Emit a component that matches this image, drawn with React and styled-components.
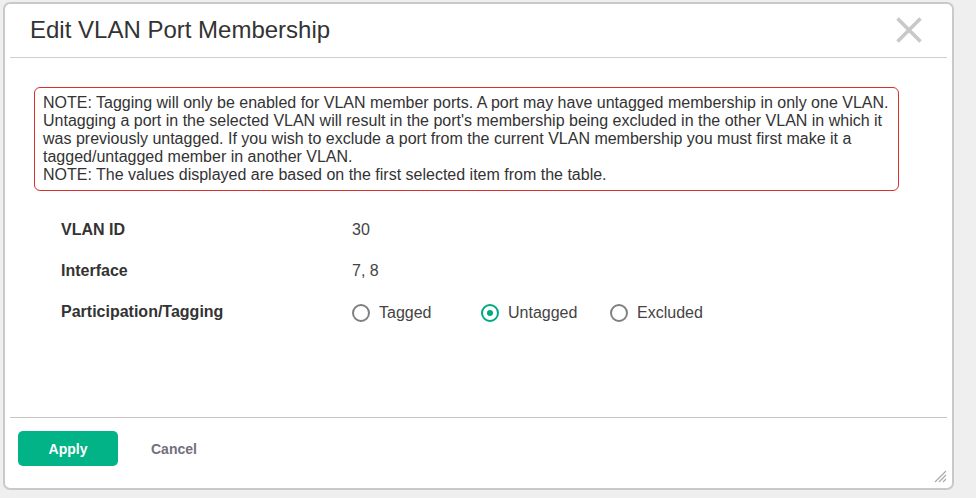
import styled, { createGlobalStyle } from "styled-components";

const GlobalStyle = createGlobalStyle`
  html, body {
    margin: 0;
    padding: 0;
    background: #efefef;
    font-family: "Liberation Sans", Arial, sans-serif;
    color: #333;
  }
  * {
    box-sizing: border-box;
  }
`;

const Page = styled.div`
  width: 976px;
  height: 498px;
  padding: 2px 22px 8px 3px;
  overflow: hidden;
`;

const Dialog = styled.div`
  position: relative;
  width: 951px;
  height: 488px;
  background: #fff;
  border: 2px solid #c9c9c9;
  border-radius: 7px;
  display: flex;
  flex-direction: column;
`;

const Header = styled.div`
  height: 54px;
  margin: 0 5px;
  padding: 0 0 2px 20px;
  border-bottom: 1px solid #cfcfcf;
  display: flex;
  align-items: center;
  justify-content: space-between;
`;

const Title = styled.h1`
  margin: 0;
  font-size: 24px;
  font-weight: 400;
  color: #333;
`;

const CloseButton = styled.button`
  width: 30px;
  height: 30px;
  margin-right: 23px;
  padding: 0;
  border: none;
  background: transparent;
  cursor: pointer;
  display: flex;
  align-items: center;
  justify-content: center;
`;

const Body = styled.div`
  flex: 1;
  padding: 29px 0 0 29px;
`;

const Note = styled.div`
  width: 865px;
  padding: 6px 8px;
  border: 1px solid #d9302c;
  border-radius: 6px;
  font-size: 16px;
  line-height: 18px;
  color: #333;
`;

const Form = styled.div`
  padding: 18px 0 0 27px;
`;

const Row = styled.div`
  height: 41px;
  display: flex;
  align-items: center;
`;

const Label = styled.div`
  width: 291px;
  font-size: 16px;
  font-weight: 700;
  color: #333;
`;

const Value = styled.div`
  font-size: 16px;
  color: #444;
  display: flex;
  align-items: center;
`;

const Option = styled.label`
  width: 129px;
  display: flex;
  align-items: center;
  gap: 9px;
  font-size: 16px;
  color: #444;
  cursor: pointer;
  padding-top: 2px;
`;

const Radio = styled.span`
  width: 18px;
  height: 18px;
  border-radius: 50%;
  border: 2px solid ${(p) => (p.$checked ? "#01a982" : "#808080")};
  display: flex;
  align-items: center;
  justify-content: center;
  &::after {
    content: "";
    width: 6px;
    height: 6px;
    border-radius: 50%;
    background: ${(p) => (p.$checked ? "#01a982" : "transparent")};
  }
`;

const Footer = styled.div`
  margin: 0 5px;
  padding: 13px 0 22px 8px;
  border-top: 1px solid #c4c4c4;
  display: flex;
  align-items: center;
  gap: 33px;
`;

const Button = styled.button`
  height: 35px;
  padding: 0;
  border: none;
  border-radius: 5px;
  font-family: inherit;
  font-size: 14px;
  font-weight: 700;
  cursor: pointer;
  width: ${(p) => (p.$primary ? "100px" : "auto")};
  background: ${(p) => (p.$primary ? "#01b386" : "transparent")};
  color: ${(p) => (p.$primary ? "#fff" : "#72707e")};
`;

const Grip = styled.svg`
  position: absolute;
  right: 5px;
  bottom: 5px;
`;

const options = [
  { label: "Tagged", checked: false },
  { label: "Untagged", checked: true },
  { label: "Excluded", checked: false },
];

export default function App() {
  return (
    <>
      <GlobalStyle />
      <Page>
        <Dialog>
          <Header>
            <Title>Edit VLAN Port Membership</Title>
            <CloseButton aria-label="Close">
              <svg width="26" height="26" viewBox="0 0 26 26">
                <path
                  d="M1.5 1.5 L24.5 24.5 M24.5 1.5 L1.5 24.5"
                  stroke="#c8c8c8"
                  strokeWidth="3.6"
                  fill="none"
                />
              </svg>
            </CloseButton>
          </Header>
          <Body>
            <Note>
              NOTE: Tagging will only be enabled for VLAN member ports. A port may have untagged membership in only one VLAN.
              <br />
              Untagging a port in the selected VLAN will result in the port's membership being excluded in the other VLAN in which it
              <br />
              was previously untagged. If you wish to exclude a port from the current VLAN membership you must first make it a
              <br />
              tagged/untagged member in another VLAN.
              <br />
              NOTE: The values displayed are based on the first selected item from the table.
            </Note>
            <Form>
              <Row>
                <Label>VLAN ID</Label>
                <Value>30</Value>
              </Row>
              <Row>
                <Label>Interface</Label>
                <Value>7, 8</Value>
              </Row>
              <Row>
                <Label>Participation/Tagging</Label>
                <Value>
                  {options.map((o) => (
                    <Option key={o.label}>
                      <Radio $checked={o.checked} />
                      {o.label}
                    </Option>
                  ))}
                </Value>
              </Row>
            </Form>
          </Body>
          <Footer>
            <Button $primary>Apply</Button>
            <Button>Cancel</Button>
          </Footer>
          <Grip width="14" height="14" viewBox="0 0 14 14">
            <path
              d="M13 2 L2 13 M13 6 L6 13 M13 10 L10 13"
              stroke="#aaa"
              strokeWidth="1.2"
            />
          </Grip>
        </Dialog>
      </Page>
    </>
  );
}
